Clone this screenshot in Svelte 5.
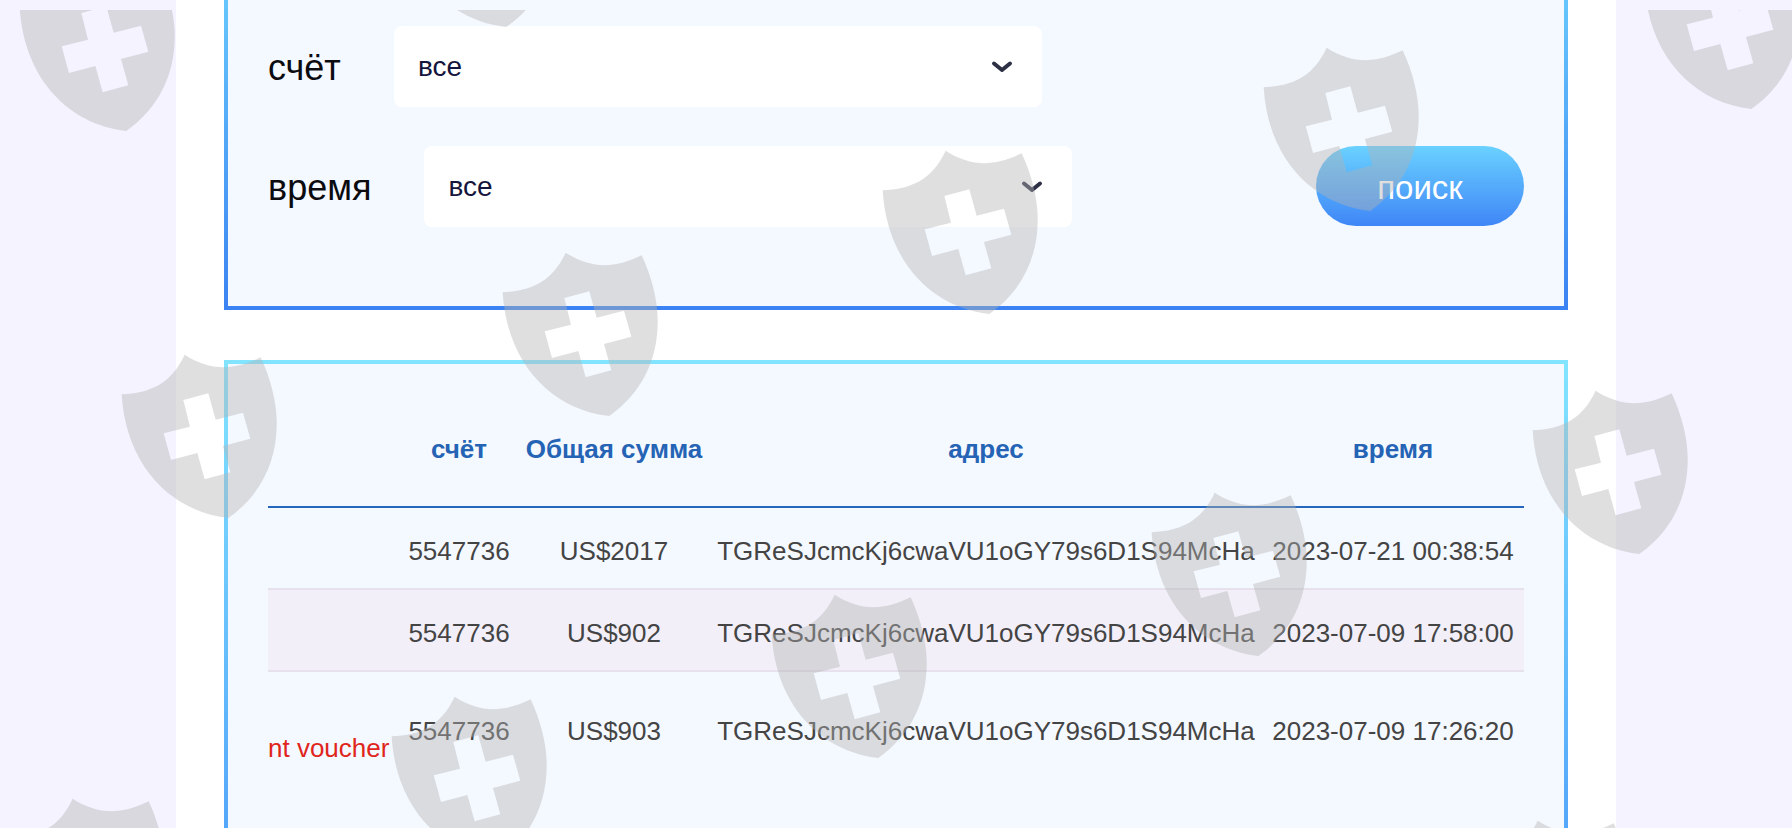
<script>
  const filters = [
    { id: 'account', label: 'счёт' },
    { id: 'time', label: 'время' }
  ];

  const rows = [
    { link: '', account: '5547736', total: 'US$2017', address: 'TGReSJcmcKj6cwaVU1oGY79s6D1S94McHa', time: '2023-07-21 00:38:54' },
    { link: '', account: '5547736', total: 'US$902', address: 'TGReSJcmcKj6cwaVU1oGY79s6D1S94McHa', time: '2023-07-09 17:58:00' },
    { link: 'nt voucher', account: '5547736', total: 'US$903', address: 'TGReSJcmcKj6cwaVU1oGY79s6D1S94McHa', time: '2023-07-09 17:26:20' }
  ];

  // Top-left corners of the watermark shields
  const shields = [
    [7, -55], [387, -159], [870, 128], [1251, 25], [1632, -77],
    [490, 230], [109, 332], [379, 674], [759, 572], [1139, 470],
    [1520, 368], [-3, 776], [1462, 798]
  ];
</script>

<div class="page">
  <main class="sheet">
    <form class="panel search" onsubmit={(e) => e.preventDefault()}>
      <div class="fields">
        {#each filters as f}
          <div class="field">
            <label for={f.id}>{f.label}</label>
            <div class="select">
              <select id={f.id}><option>все</option></select>
              <svg class="chevron" viewBox="0 0 20 10" aria-hidden="true">
                <path d="M2 1.5 L10 8 L18 1.5" />
              </svg>
            </div>
          </div>
        {/each}
      </div>
      <button type="submit">поиск</button>
    </form>

    <section class="panel results">
      <table>
        <colgroup>
          <col class="c-link" /><col class="c-account" /><col class="c-total" /><col class="c-address" /><col class="c-time" />
        </colgroup>
        <thead>
          <tr>
            <th></th>
            <th>счёт</th>
            <th>Общая сумма</th>
            <th>адрес</th>
            <th>время</th>
          </tr>
        </thead>
        <tbody>
          {#each rows as r}
            <tr class:tall={r.link}>
              <td class="link">{#if r.link}<a href="#voucher">{r.link}</a>{/if}</td>
              <td>{r.account}</td>
              <td>{r.total}</td>
              <td>{r.address}</td>
              <td>{r.time}</td>
            </tr>
          {/each}
        </tbody>
      </table>
    </section>
  </main>

  <svg class="watermark" aria-hidden="true">
    <symbol id="shield" viewBox="0 0 540 570">
      <path
        fill-rule="evenodd"
        d="M38 157 C125 152 186 126 227 38 C300 85 370 88 455 46 C487 115 505 190 503 250 C502 360 455 460 358 528 C180 508 50 365 38 157 Z
           M223 174 L243 254 L164 274 L186 354 L265 333 L287 412 L364 391 L342 312 L424 290 L402 212 L320 233 L298 154 Z"
      />
    </symbol>
    {#each shields as [x, y]}
      <use href="#shield" {x} {y} width="180" height="190" />
    {/each}
  </svg>
</div>

<style>
  :global(body) {
    margin: 0;
    background: #f4f3ff;
  }

  .page {
    position: relative;
    height: 100vh;
    overflow: hidden;
    font-family: "Liberation Sans", Arial, sans-serif;
  }

  .sheet {
    box-sizing: border-box;
    display: flex;
    flex-direction: column;
    gap: 50px;
    max-width: 1440px;
    height: 100%;
    margin: 0 auto;
    padding: 0 48px;
    background: #fff;
  }

  .panel {
    background: #f4f8ff;
    border: 4px solid;
  }

  .search {
    display: flex;
    justify-content: space-between;
    align-items: flex-end;
    padding: 26px 40px 80px;
    border-top: 0;
    border-image: linear-gradient(#66c6fc, #3b83f2) 1;
  }

  .fields {
    display: flex;
    flex-direction: column;
    gap: 40px;
  }

  .field {
    display: flex;
    align-items: center;
    gap: 53px;
  }

  label {
    padding-top: 4px;
    font-size: 36px;
    color: #0b0b10;
  }

  .select {
    position: relative;
    width: 648px;
  }

  select {
    appearance: none;
    display: block;
    width: 100%;
    height: 81px;
    margin-bottom: -1px;
    padding: 0 64px 0 24px;
    border: 0;
    border-radius: 8px;
    background: #fff;
    font: 28px "Liberation Sans", Arial, sans-serif;
    color: #14143c;
  }

  .chevron {
    position: absolute;
    right: 30px;
    top: 36px;
    width: 20px;
    height: 10px;
    fill: none;
    stroke: #2d2f45;
    stroke-width: 4;
    stroke-linecap: round;
    stroke-linejoin: round;
    overflow: visible;
    pointer-events: none;
  }

  button {
    width: 208px;
    height: 80px;
    padding: 4px 0 0;
    border: 0;
    border-radius: 40px;
    background: linear-gradient(#6ad1ff, #3f86f7);
    font: 33px "Liberation Sans", Arial, sans-serif;
    color: #fff;
  }

  .results {
    flex: 1;
    padding: 40px 40px 0;
    border-bottom: 0;
    border-image: linear-gradient(#82e4ff, #54a6fa) 1;
  }

  table {
    width: 100%;
    table-layout: fixed;
    border-collapse: separate;
    border-spacing: 0;
    font-size: 26px;
    line-height: 32px;
    text-align: center;
    white-space: nowrap;
    color: #444;
  }

  .c-link { width: 132px; }
  .c-account { width: 118px; }
  .c-total { width: 192px; }
  .c-time { width: 262px; }

  th {
    padding: 29px 0 41px;
    border-bottom: 2px solid #2467bd;
    color: #2563b5;
  }

  td {
    padding: 27px 0 21px;
    vertical-align: top;
  }

  tbody tr:nth-child(even) td {
    background: #f2eff9;
    border-top: 2px solid #e6e1ec;
    border-bottom: 2px solid #e6e1ec;
  }

  .tall td {
    padding-top: 43px;
  }

  .tall .link {
    padding-top: 60px;
    text-align: left;
  }

  a {
    color: #e0251b;
    text-decoration: none;
  }

  .watermark {
    position: absolute;
    inset: 10px 0 0;
    width: 100%;
    height: 100%;
    overflow: hidden;
    pointer-events: none;
    fill: rgb(178 178 178 / 0.42);
  }
</style>
